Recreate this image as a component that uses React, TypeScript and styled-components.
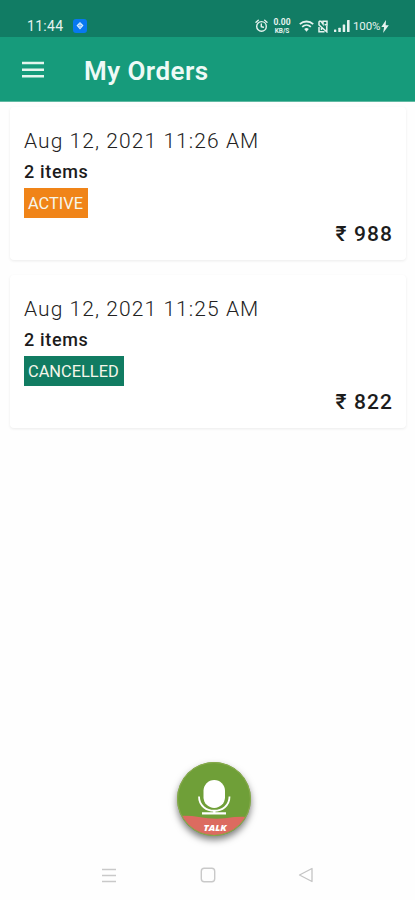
import React from "react";
import styled, { createGlobalStyle } from "styled-components";

const GlobalStyle = createGlobalStyle`
  * { box-sizing: border-box; }
  body { margin: 0; background: #fefefe; font-family: Roboto, "Noto Sans", sans-serif; }
`;

const Screen = styled.div`
  display: flex;
  flex-direction: column;
  height: 900px;
  overflow: hidden;
  background: #fefefe;
`;

const StatusBar = styled.div`
  display: flex;
  align-items: center;
  height: 37px;
  padding: 15px 26px 0 27px;
  background: #117c64;
  color: #e6f3ef;
  flex: none;
`;

const Clock = styled.span`
  width: 46px;
  font-size: 14px;
  line-height: 22px;
  letter-spacing: 0.3px;
`;

const StatusIcons = styled.div`
  display: flex;
  align-items: center;
  margin-left: auto;
  height: 22px;
`;

const Speed = styled.div`
  display: flex;
  flex-direction: column;
  align-items: center;
  width: 20px;
  margin: 0 7px 0 4px;
  font-weight: 700;
`;

const SpeedValue = styled.span`
  font-size: 8.5px;
  line-height: 10px;
`;

const SpeedUnit = styled.span`
  font-size: 6.5px;
  line-height: 8px;
`;

const Battery = styled.span`
  width: 28px;
  margin-left: 3px;
  font-size: 11.5px;
  letter-spacing: -0.1px;
  white-space: nowrap;
`;

const Header = styled.header`
  display: flex;
  align-items: center;
  height: 65px;
  padding: 2px 22px 0;
  background: #169b7b;
  border-bottom: 1px solid #5fb9a2;
  flex: none;
`;

const Title = styled.h1`
  margin: 2px 0 0 39px;
  color: #eefaf6;
  font-size: 26px;
  font-weight: 600;
  line-height: 32px;
  letter-spacing: 0.45px;
`;

const Orders = styled.main`
  display: flex;
  flex-direction: column;
  gap: 15px;
  padding: 5px 9px 0 10px;
  flex: 1;
`;

const Card = styled.article`
  display: flex;
  flex-direction: column;
  align-items: flex-start;
  height: 153px;
  padding: 20px 13px 0 14px;
  border-radius: 4px;
  background: #fff;
  box-shadow: 0 1px 3px rgba(0, 0, 0, 0.08);
`;

const OrderDate = styled.time`
  color: #222;
  font-size: 21px;
  font-weight: 300;
  line-height: 28px;
  letter-spacing: 1.07px;
  white-space: nowrap;
`;

const Items = styled.div`
  margin-top: 4px;
  color: #1c1c1c;
  font-size: 18px;
  font-weight: 500;
  line-height: 25px;
  letter-spacing: 0.65px;
`;

const Badge = styled.span<{ $color: string }>`
  height: 30px;
  margin-top: 4px;
  padding: 0 5px 0 4px;
  background: ${({ $color }) => $color};
  color: #f6f6ea;
  font-size: 16.4px;
  line-height: 32px;
`;

const Price = styled.div`
  align-self: flex-end;
  margin-top: 3px;
  color: #1c1c1c;
  font-size: 21px;
  font-weight: 500;
  line-height: 26px;
  letter-spacing: 1.1px;
`;

const TalkArea = styled.div`
  display: flex;
  justify-content: center;
  padding-left: 13px;
  height: 88px;
  flex: none;
`;

const TalkButton = styled.button`
  width: 74px;
  height: 74px;
  padding: 0;
  border: 0;
  border-radius: 50%;
  background: #6fa03a;
  box-shadow: 0 4px 7px rgba(0, 0, 0, 0.5);
`;

const NavBar = styled.nav`
  display: flex;
  align-items: center;
  justify-content: space-between;
  height: 50px;
  padding: 0 101px;
  flex: none;
`;

const AppMark = () => (
  <svg width="14" height="14" viewBox="0 0 14 14">
    <rect width="14" height="14" rx="3" fill="#0878f0" />
    <path d="M7 3L10.5 6.5L7 10.5L3.5 6.5Z" fill="#d8edff" />
    <path d="M7 4.5V9M5 6.6H9" stroke="#6aaef5" strokeWidth=".8" />
  </svg>
);

const Alarm = () => (
  <svg width="13" height="14" viewBox="0 0 13 14" fill="none" stroke="currentColor" strokeWidth="1.4" strokeLinecap="round">
    <circle cx="6.5" cy="7.4" r="4.8" />
    <path d="M1 3.3L3.3 1.3M12 3.3L9.7 1.3M6.3 5V7.7L8.4 8.2" />
  </svg>
);

const Wifi = () => (
  <svg width="15" height="13" viewBox="0 0 15 13" fill="none" stroke="currentColor" strokeWidth="1.8">
    <path d="M.8 4.2C4.6.6 10.4.6 14.2 4.2M3.2 6.8C5.7 4.5 9.3 4.5 11.8 6.8" />
    <path d="M5.2 9Q7.5 7.2 9.8 9L7.5 11.8Z" fill="currentColor" stroke="none" />
  </svg>
);

const Sim = () => (
  <svg width="10" height="13" viewBox="0 0 10 13" fill="none" stroke="currentColor" strokeWidth="1.5">
    <path d="M1 1.2H3L5 4V1.2H9V5L6.5 4.5M1 1.2V5L8.8 11.8V6M1 7V11.8H6.5M3.5 8V10" />
  </svg>
);

const Signal = () => (
  <svg width="16" height="12" viewBox="0 0 16 12" fill="currentColor">
    <rect y="9.5" width="2.3" height="2.5" rx=".5" />
    <rect x="4.3" y="7.7" width="2.5" height="4.3" rx=".5" />
    <rect x="8.7" y="4.5" width="2.5" height="7.5" rx=".5" />
    <rect x="13" width="2.6" height="12" rx=".5" />
  </svg>
);

const Bolt = () => (
  <svg width="8" height="13" viewBox="0 0 8 13" fill="currentColor">
    <path d="M5 0L.3 7H3.1L2.1 13L7.8 5.2H4.7Z" />
  </svg>
);

const Menu = () => (
  <svg width="23" height="18" viewBox="0 0 23 18" fill="none" stroke="#e4f5ee" strokeWidth="2.4">
    <path d="M0 2H22M0 8.7H22M0 15.3H22" />
  </svg>
);

const TalkIcon = () => (
  <svg width="74" height="74" viewBox="0 0 74 74" style={{ display: "block" }}>
    <defs>
      <clipPath id="disc"><circle cx="37" cy="37" r="36" /></clipPath>
    </defs>
    <circle cx="37" cy="37" r="36.4" fill="#6f9f38" stroke="#8aab4d" />
    <path clipPath="url(#disc)" d="M0 54Q12 53 22 55Q37 58 50 56Q60 54 74 55V74H0Z" fill="#dc6b60" />
    <rect x="26.5" y="18" width="21.5" height="28" rx="10.7" fill="#fff" />
    <path d="M22 34.5C22 53.5 52.5 53.5 52.5 34.5" fill="none" stroke="#fff" strokeWidth="1.8" />
    <path d="M37.3 48V51M25 51.3H49" fill="none" stroke="#fff" strokeWidth="2.3" />
    <text x="26.5" y="69" fill="#fff" fontFamily="Open Sans" fontSize="9.5" fontWeight="800" fontStyle="italic" textLength="23">TALK</text>
  </svg>
);

const Recents = () => (
  <svg width="16" height="15" viewBox="0 0 16 15" fill="none" stroke="#c9c9c9" strokeWidth="1.3">
    <path d="M1 1.5H15M1 7.5H15M1 13.5H15" />
  </svg>
);

const Home = () => (
  <svg width="16" height="16" viewBox="0 0 16 16" fill="none" stroke="#c9c9c9" strokeWidth="1.4">
    <rect x="1.3" y="1.3" width="13.4" height="13.4" rx="3" />
  </svg>
);

const Back = () => (
  <svg width="16" height="16" viewBox="0 0 16 16" fill="none" stroke="#c4c4c4" strokeWidth="1.3" strokeLinejoin="round">
    <path d="M14 1.5V14.5L1.5 8Z" />
  </svg>
);

const orders = [
  { date: "Aug 12, 2021 11:26 AM", status: "ACTIVE", color: "#f08418", price: "₹ 988" },
  { date: "Aug 12, 2021 11:25 AM", status: "CANCELLED", color: "#117c62", price: "₹ 822" },
];

const SpacedIcon = styled.span<{ $gap: number }>`
  display: flex;
  margin-right: ${({ $gap }) => $gap}px;
`;

export default function App() {
  return (
    <Screen>
      <GlobalStyle />
      <StatusBar>
        <Clock>11:44</Clock>
        <AppMark />
        <StatusIcons>
          <Alarm />
          <Speed>
            <SpeedValue>0.00</SpeedValue>
            <SpeedUnit>KB/S</SpeedUnit>
          </Speed>
          <SpacedIcon $gap={4}><Wifi /></SpacedIcon>
          <SpacedIcon $gap={6}><Sim /></SpacedIcon>
          <Signal />
          <Battery>100%</Battery>
          <Bolt />
        </StatusIcons>
      </StatusBar>
      <Header>
        <Menu />
        <Title>My Orders</Title>
      </Header>
      <Orders>
        {orders.map((order) => (
          <Card key={order.date}>
            <OrderDate>{order.date}</OrderDate>
            <Items>2 items</Items>
            <Badge $color={order.color}>{order.status}</Badge>
            <Price>{order.price}</Price>
          </Card>
        ))}
      </Orders>
      <TalkArea>
        <TalkButton aria-label="Talk"><TalkIcon /></TalkButton>
      </TalkArea>
      <NavBar>
        <Recents />
        <Home />
        <Back />
      </NavBar>
    </Screen>
  );
}
